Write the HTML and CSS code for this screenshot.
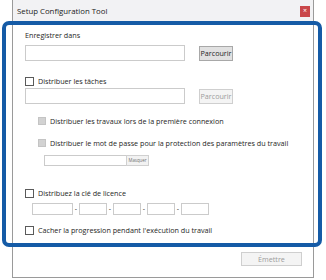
FILE: index.html
```html
<!DOCTYPE html>
<html lang="fr">
<head>
    <meta charset="UTF-8">
    <title>Setup Configuration Tool</title>
    <link rel="stylesheet" href="styles.css">
</head>
<body>
    <div class="window">
        <div class="titlebar">
            <span class="title">Setup Configuration Tool</span>
            <span class="close">×</span>
        </div>

        <div class="content">
            <div class="label">Enregistrer dans</div>
            <div class="path-row">
                <div class="field path"></div>
                <button class="btn browse">Parcourir</button>
            </div>

            <label class="check main-check"><span class="box"></span>Distribuer les tâches</label>
            <div class="path-row second">
                <div class="field path"></div>
                <button class="btn browse disabled">Parcourir</button>
            </div>

            <div class="sub">
                <label class="check sub-check first"><span class="box"></span>Distribuer les travaux lors de la première connexion</label>
                <label class="check sub-check"><span class="box"></span>Distribuer le mot de passe pour la protection des paramètres du travail</label>
                <div class="pw-row">
                    <div class="field pw"></div>
                    <button class="btn mini">Masquer</button>
                </div>
            </div>

            <label class="check main-check licence"><span class="box"></span>Distribuez la clé de licence</label>
            <div class="key-row">
                <div class="field key first-key"></div>
                <span class="dash">-</span>
                <div class="field key"></div>
                <span class="dash">-</span>
                <div class="field key"></div>
                <span class="dash">-</span>
                <div class="field key"></div>
                <span class="dash">-</span>
                <div class="field key"></div>
            </div>

            <label class="check main-check hide"><span class="box"></span>Cacher la progression pendant l'exécution du travail</label>
        </div>

        <div class="footer">
            <button class="btn emit disabled">Émettre</button>
        </div>
    </div>

    <div class="highlight"></div>
</body>
</html>
```

FILE: styles.css
```css
* {
    margin: 0;
    padding: 0;
    box-sizing: border-box;
}

body {
    background: #ffffff;
    color: #1e1e1e;
    font-family: "Open Sans", "Noto Sans", sans-serif;
    font-size: 7.2px;
    height: 280px;
    overflow: hidden;
    position: relative;
}

.window {
    margin-left: 12px;
    width: 302px;
    height: 278px;
    border: 1px solid #9a9a9a;
    border-top: none;
    background: #ffffff;
    display: flex;
    flex-direction: column;
}

.titlebar {
    height: 22px;
    background: #f2f2f4;
    border-bottom: 1px solid #b4b4b4;
    display: flex;
    align-items: flex-start;
    justify-content: space-between;
    padding: 0 3px 0 4px;
}

.title {
    font-size: 7.8px;
    line-height: 11px;
    margin-top: 6px;
    color: #1a1a1a;
}

.close {
    width: 10px;
    height: 11px;
    margin-top: 6px;
    background: #c9474a;
    color: #ffffff;
    font-size: 7px;
    line-height: 10px;
    text-align: center;
}

.content {
    padding: 8px 0 0 12px;
    display: flex;
    flex-direction: column;
}

.label {
    line-height: 11px;
}

.path-row {
    display: flex;
    align-items: center;
    margin-top: 4px;
    height: 16px;
}

.path-row.second {
    margin-top: 1px;
}

.field {
    border: 1px solid #cbcbcb;
    background: #ffffff;
}

.field.path {
    width: 160px;
    height: 16px;
}

.btn {
    font-family: inherit;
    font-size: 7.2px;
    color: #1e1e1e;
    background: #e1e1e1;
    border: 1px solid #a8a8a8;
}

.btn.browse {
    width: 34px;
    height: 15px;
    margin-left: 14px;
    line-height: 13px;
}

.btn.disabled {
    background: #f4f4f4;
    border-color: #cfcfcf;
    color: #9c9c9c;
}

.check {
    display: flex;
    align-items: center;
    height: 12px;
    line-height: 12px;
    white-space: nowrap;
}

.box {
    width: 9px;
    height: 9px;
    border: 1px solid #5a5a5a;
    background: #ffffff;
    margin-right: 4px;
    flex-shrink: 0;
}

.main-check {
    margin-top: 14px;
}

.main-check.licence {
    margin-top: 21px;
}

.main-check.hide {
    margin-top: 9px;
}

.sub {
    padding-left: 13px;
    display: flex;
    flex-direction: column;
}

.sub-check {
    margin-top: 10px;
}

.sub-check.first {
    margin-top: 11px;
}

.sub-check .box {
    width: 8px;
    height: 8px;
    background: #d2d2d2;
    border-color: #c4c4c4;
    margin-right: 4px;
}

.pw-row {
    display: flex;
    margin-top: 6px;
    margin-left: 6px;
    height: 11px;
}

.field.pw {
    width: 83px;
    height: 11px;
}

.btn.mini {
    width: 23px;
    height: 11px;
    font-size: 4.4px;
    line-height: 9px;
    background: #f2f2f2;
    border-color: #d0d0d0;
    color: #707070;
    margin-left: -1px;
}

.key-row {
    display: flex;
    align-items: center;
    margin-top: 4px;
    margin-left: 7px;
    height: 12px;
}

.field.key {
    width: 28px;
    height: 12px;
}

.field.first-key {
    width: 41px;
}

.dash {
    width: 6px;
    text-align: center;
    font-size: 7px;
    line-height: 12px;
}

.footer {
    display: flex;
    justify-content: flex-end;
    padding: 16px 11px 0 0;
}

.btn.emit {
    width: 61px;
    height: 14px;
    line-height: 12px;
}

.highlight {
    position: absolute;
    left: 2px;
    top: 21px;
    width: 320px;
    height: 226px;
    border: 4px solid #155ba6;
    border-radius: 7px;
    pointer-events: none;
}
```
